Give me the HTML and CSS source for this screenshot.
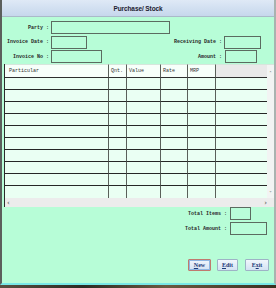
FILE: index.html
```html
<!DOCTYPE html>
<html>
<head>
<meta charset="utf-8">
<link rel="stylesheet" href="styles.css">
</head>
<body>
<div class="win">
  <div class="title">Purchase/ Stock</div>
  <div class="body">
    <div class="top">
      <span class="lbl">Party :</span>
      <div class="cell"><span class="inp w-party"></span></div>
      <span></span><span></span>

      <span class="lbl">Invoice Date :</span>
      <div class="cell"><span class="inp w-date"></span></div>
      <span class="lbl">Receiving Date :</span>
      <div class="cell"><span class="inp w-rdate"></span></div>

      <span class="lbl">Invoice No :</span>
      <div class="cell"><span class="inp w-no"></span></div>
      <span class="lbl">Amount :</span>
      <div class="cell"><span class="inp w-amt"></span></div>
    </div>

    <div class="table">
      <div class="tmain">
        <div class="grid">
          <div class="h">Particular</div>
          <div class="h c">Qnt.</div>
          <div class="h c">Value</div>
          <div class="h c">Rate</div>
          <div class="h c">MRP</div>
          <div class="h c gray"></div>
        </div>
        <div class="grid rows" id="rows"></div>
      </div>
      <div class="vscroll"><span>&#708;</span><span>&#709;</span></div>
    </div>
    <div class="hscroll"><span>&lsaquo;</span><span>&rsaquo;</span></div>

    <div class="totals">
      <span class="lbl">Total Items :</span>
      <div class="cell"><span class="inp w-items"></span></div>
      <span class="lbl">Total Amount :</span>
      <div class="cell"><span class="inp w-tamt"></span></div>
    </div>

    <div class="buttons">
      <button class="btn focus"><u>N</u>ew</button>
      <button class="btn w-edit"><u>E</u>dit</button>
      <button class="btn w-exit">E<u>x</u>it</button>
    </div>
  </div>
</div>
<div class="desk"></div>
<script>
  var r = document.getElementById('rows');
  var html = '';
  for (var i = 0; i < 10; i++) {
    html += '<div class="d"></div><div class="d c"></div><div class="d c"></div><div class="d c"></div><div class="d c"></div><div class="d c"></div>';
  }
  r.innerHTML = html;
</script>
</body>
</html>
```
FILE: styles.css
```css
* { box-sizing: border-box; }
html, body { margin: 0; padding: 0; }
body {
  width: 276px;
  height: 288px;
  overflow: hidden;
  background: #3b3424;
  font-family: "Liberation Mono", "DejaVu Sans Mono", monospace;
  font-size: 5px;
  font-weight: bold;
  color: #2a2a2a;
}
.win {
  width: 276px;
  height: 285px;
  border-left: 2px solid #5b5f5c;
  border-right: 2px solid #a9b3b0;
  border-bottom: 2px solid #78e8e6;
  background: #b7fdd7;
  display: flex;
  flex-direction: column;
}
.title {
  height: 17px;
  background: linear-gradient(#dfe9f6, #c6d7ec);
  border-bottom: 1px solid #aab9c9;
  font-family: "Liberation Sans", Arial, sans-serif;
  font-weight: bold;
  font-size: 6.5px;
  color: #1c2030;
  display: flex;
  align-items: center;
  justify-content: center;
  letter-spacing: -0.1px;
}
.body {
  flex: 1;
  display: flex;
  flex-direction: column;
  padding-top: 4px;
}
.top {
  display: grid;
  grid-template-columns: 47px 119px 50px 48px;
  grid-template-rows: 13px 13px 13px;
  row-gap: 1.5px;
  column-gap: 2px;
}
.lbl {
  justify-self: end;
  align-self: center;
  white-space: nowrap;
}
.cell { display: flex; }
.inp {
  display: block;
  height: 13px;
  border: 1px solid #5b6b60;
  background: #b9fdd9;
}
.w-party { width: 119px; }
.w-date { width: 36px; }
.w-no { width: 51px; }
.w-rdate { width: 37px; }
.w-amt { width: 32px; margin-left: 1px; }

.table {
  margin-top: 1px;
  margin-left: 2px;
  display: flex;
  height: 134px;
  border-left: 1px solid #2a2a2a;
}
.tmain { width: 262px; background: #eafff3; }
.grid {
  display: grid;
  grid-template-columns: 103px 18px 34px 27px 28px 52px;
}
.h {
  height: 14px;
  background: #f7fffa;
  border-bottom: 1px solid #2e2e2e;
  border-top: 1px solid #d6e6dc;
  padding-left: 4px;
  display: flex;
  align-items: center;
  font-weight: normal;
  color: #333;
}
.h.c { padding-left: 2px; }
.h.gray { background: #e9e9e9; }
.d {
  height: 12px;
  border-bottom: 1px solid #262626;
}
.c { border-left: 1px solid #5a605a; }
.rows .d:nth-last-child(-n+6) { border-bottom: none; }
.vscroll {
  width: 7px;
  background: #f2f4f3;
  display: flex;
  flex-direction: column;
  justify-content: space-between;
  align-items: center;
  font-family: "DejaVu Sans", sans-serif;
  font-weight: normal;
  font-size: 5px;
  color: #555;
  padding: 5px 0 2px;
  border-top: 1px solid #d6e6dc;
}
.hscroll {
  margin-left: 2px;
  height: 9px;
  background: #ececec;
  display: flex;
  justify-content: space-between;
  align-items: center;
  padding: 0 7px 0 2px;
  font-family: "DejaVu Sans", sans-serif;
  font-weight: normal;
  font-size: 7px;
  color: #444;
  border-left: 1px solid #2a2a2a;
}
.totals {
  display: grid;
  grid-template-columns: 1fr 44px;
  grid-template-rows: 13px 13px;
  row-gap: 2px;
  column-gap: 3px;
}
.w-items { width: 21px; }
.w-tamt { width: 37px; }
.buttons {
  display: flex;
  justify-content: flex-end;
  margin-top: 24px;
  padding-right: 5px;
  gap: 6px;
}
.btn {
  width: 23px;
  height: 12px;
  padding: 0;
  margin: 0;
  border: 1px solid #9eb3c6;
  background: linear-gradient(#f1f6fc, #d3e2f3);
  font-family: "Liberation Serif", serif;
  font-weight: bold;
  font-size: 6px;
  color: #1e3a78;
  border-radius: 1px;
}
.btn.focus { border-color: #c07a6e; box-shadow: inset 0 0 0 1px #8fb6e2; }
.w-edit { width: 21px; }
.w-exit { width: 24px; margin-left: 1px; }
.desk {
  height: 3px;
  background: linear-gradient(90deg, #5a5040, #2c2a22 30%, #6a5a40 60%, #3a3020);
}
```
